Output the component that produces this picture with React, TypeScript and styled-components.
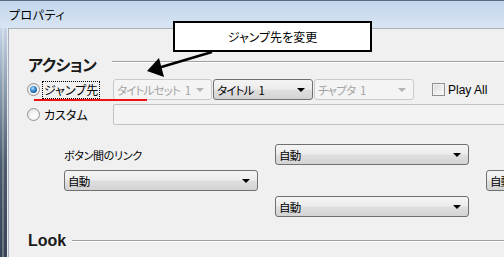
import React from "react";
import styled, { createGlobalStyle } from "styled-components";

const GlobalStyle = createGlobalStyle`
  html, body {
    margin: 0;
    padding: 0;
    background: #f0f0f0;
  }
  body {
    font-family: "Noto Sans CJK JP", "Liberation Sans", sans-serif;
    font-feature-settings: "palt";
  }
`;

const Window = styled.div`
  position: relative;
  width: 504px;
  height: 257px;
  overflow: hidden;
  display: flex;
  flex-direction: column;
  background: #f0f0f0;
`;

const TitleBar = styled.div`
  height: 28px;
  flex: none;
  display: flex;
  align-items: center;
  padding-left: 9px;
  box-sizing: border-box;
  border-top: 1px solid #5a6b7e;
  background: linear-gradient(180deg, #c3d6ec 0%, #cfdff0 60%, #d8e5f3 100%);
  font-size: 12px;
  color: #000;
  letter-spacing: 0.5px;
`;

const Frame = styled.div`
  flex: none;
  height: 229px;
  display: flex;
`;

const SideBorder = styled.div`
  width: 8px;
  flex: none;
  box-sizing: border-box;
  border-right: 1px solid #e8ecf0;
  background:
    linear-gradient(90deg, rgba(0, 0, 0, 0) 2px, rgba(255, 255, 255, 0.25) 2px, rgba(255, 255, 255, 0.25) 4px, rgba(0, 0, 0, 0) 4px),
    linear-gradient(180deg, #c6d5e5 0%, #8f9fb2 25%, #4b5a6c 60%, #364455 100%);
`;

const Panel = styled.div`
  flex: 1;
  min-width: 0;
  box-sizing: border-box;
  border-top: 1px solid #a8b0ba;
  border-left: 1px solid #a8b0ba;
  background: #f0f0f0;
  padding: 25px 0 0 18px;
  display: flex;
  flex-direction: column;
  & > * {
    flex: none;
  }
`;

const SectionHeader = styled.div<{ $top?: number; $lineShift?: number; $lineGap: number }>`
  display: flex;
  align-items: center;
  height: 20px;
  margin-top: ${({ $top }) => $top ?? 0}px;
  margin-left: 1px;
  &::after {
    content: "";
    flex: 1;
    margin-left: ${({ $lineGap }) => $lineGap}px;
    transform: translateY(${({ $lineShift }) => $lineShift ?? 0}px);
    border-top: 1px solid #a0a0a0;
    border-bottom: 1px solid #ffffff;
  }
`;

const HeaderText = styled.span<{ $latin?: boolean }>`
  font-family: ${({ $latin }) =>
    $latin ? '"Liberation Sans", sans-serif' : '"Noto Sans CJK JP", sans-serif'};
  font-size: 16px;
  font-weight: 700;
  color: #1a1a1a;
  line-height: 20px;
  letter-spacing: ${({ $latin }) => ($latin ? 0 : -0.5)}px;
`;

const OptionRow = styled.div<{ $top: number }>`
  display: flex;
  align-items: center;
  height: 21px;
  margin-top: ${({ $top }) => $top}px;
`;

const RadioGroup = styled.label`
  width: 86px;
  flex: none;
  display: flex;
  align-items: center;
  gap: 3px;
  font-size: 12px;
  color: #000;
`;

const RadioDot = styled.span<{ $checked?: boolean }>`
  position: relative;
  width: 13px;
  height: 13px;
  box-sizing: border-box;
  border-radius: 50%;
  border: 1px solid #929292;
  background: radial-gradient(circle at 60% 65%, #ffffff 0%, #f4f4f4 45%, #d6d6d6 100%);
  flex: none;
  &::after {
    content: "";
    display: ${({ $checked }) => ($checked ? "block" : "none")};
    position: absolute;
    left: 2px;
    top: 2px;
    width: 7px;
    height: 7px;
    border-radius: 50%;
    background: radial-gradient(circle at 40% 35%, #bfe6ff 0%, #3f96d8 35%, #14508e 80%, #0c3466 100%);
  }
`;

const RadioLabel = styled.span<{ $focused?: boolean }>`
  padding: 0 1px;
  line-height: 16px;
  outline: ${({ $focused }) => ($focused ? "1px dotted #000" : "none")};
  outline-offset: 0;
`;

const Select = styled.div<{ $width: number; $disabled?: boolean; $gap?: number }>`
  width: ${({ $width }) => $width}px;
  height: 21px;
  margin-left: ${({ $gap }) => $gap ?? 0}px;
  flex: none;
  box-sizing: border-box;
  border-radius: 3px;
  border: 1px solid ${({ $disabled }) => ($disabled ? "#c8cacc" : "#707070")};
  background: ${({ $disabled }) =>
    $disabled
      ? "#f4f4f4"
      : "linear-gradient(180deg, #f4f4f4 0%, #ececec 48%, #dfdfdf 52%, #d3d3d3 100%)"};
  display: flex;
  align-items: center;
  padding: 0 7px 0 3px;
  font-size: 11.5px;
  letter-spacing: -0.8px;
  word-spacing: 3px;
  color: ${({ $disabled }) => ($disabled ? "#a3a3a3" : "#000")};
  white-space: nowrap;
  overflow: hidden;
  &::after {
    content: "";
    margin-left: auto;
    flex: none;
    border-left: 4px solid transparent;
    border-right: 4px solid transparent;
    border-top: 4px solid ${({ $disabled }) => ($disabled ? "#b4b4b4" : "#000")};
  }
`;

const CheckGroup = styled.label`
  display: flex;
  align-items: center;
  gap: 3px;
  margin-left: 18px;
  font-family: "Liberation Sans", sans-serif;
  font-size: 12px;
  color: #000;
`;

const CheckBox = styled.span`
  width: 13px;
  height: 13px;
  box-sizing: border-box;
  border: 1px solid #8f8f8f;
  background: linear-gradient(135deg, #d8d8d8 0%, #efefef 60%, #fafafa 100%);
  box-shadow: inset 0 0 0 1px #f4f4f4;
`;

const TextField = styled.div`
  width: 420px;
  height: 21px;
  flex: none;
  box-sizing: border-box;
  border: 1px solid #c0c2c4;
  border-radius: 2px;
  background: #f3f3f3;
`;

const LinkGrid = styled.div`
  display: grid;
  grid-template-columns: 194px 194px 194px;
  grid-template-rows: 21px 21px 21px;
  column-gap: 17px;
  row-gap: 5px;
  height: 73px;
  margin-top: 19px;
  margin-left: 37px;
`;

const Cell = styled.div<{ $col: number; $row: number }>`
  grid-column: ${({ $col }) => $col};
  grid-row: ${({ $row }) => $row};
  display: flex;
  align-items: center;
`;

const SmallLabel = styled.span`
  font-size: 11px;
  letter-spacing: -0.3px;
  color: #000;
  padding-top: 1px;
`;

const Callout = styled.div`
  position: absolute;
  left: 173px;
  top: 21px;
  width: 199px;
  height: 31px;
  box-sizing: border-box;
  border: 2px solid #000;
  background: #fff;
  display: flex;
  align-items: center;
  justify-content: center;
  font-size: 12px;
  color: #000;
`;

const Arrow = styled.svg`
  position: absolute;
  left: 140px;
  top: 48px;
  overflow: visible;
`;

const RedUnderline = styled.div`
  position: absolute;
  left: 34px;
  top: 99px;
  width: 113px;
  height: 2px;
  background: #ee1111;
`;

const Auto = ({ width }: { width: number }) => <Select $width={width}>自動</Select>;

export default function App() {
  return (
    <>
      <GlobalStyle />
      <Window>
        <TitleBar>プロパティ</TitleBar>
        <Frame>
          <SideBorder />
          <Panel>
            <SectionHeader $lineShift={-2} $lineGap={16}>
              <HeaderText>アクション</HeaderText>
            </SectionHeader>

            <OptionRow $top={5}>
              <RadioGroup>
                <RadioDot $checked />
                <RadioLabel $focused>ジャンプ先</RadioLabel>
              </RadioGroup>
              <Select $width={99} $disabled>
                タイトルセット 1
              </Select>
              <Select $width={100} $gap={1}>
                タイトル 1
              </Select>
              <Select $width={100} $gap={1} $disabled>
                チャプタ 1
              </Select>
              <CheckGroup>
                <CheckBox />
                Play All
              </CheckGroup>
            </OptionRow>

            <OptionRow $top={4}>
              <RadioGroup>
                <RadioDot />
                <RadioLabel>カスタム</RadioLabel>
              </RadioGroup>
              <TextField />
            </OptionRow>

            <LinkGrid>
              <Cell $col={1} $row={1}>
                <SmallLabel>ボタン間のリンク</SmallLabel>
              </Cell>
              <Cell $col={1} $row={2}>
                <Auto width={194} />
              </Cell>
              <Cell $col={2} $row={1}>
                <Auto width={194} />
              </Cell>
              <Cell $col={2} $row={3}>
                <Auto width={194} />
              </Cell>
              <Cell $col={3} $row={2}>
                <Auto width={194} />
              </Cell>
            </LinkGrid>

            <SectionHeader $top={14} $lineGap={6}>
              <HeaderText $latin>Look</HeaderText>
            </SectionHeader>
          </Panel>
        </Frame>

        <Callout>ジャンプ先を変更</Callout>
        <Arrow width="80" height="32" viewBox="0 0 80 32">
          <line x1="72" y1="4" x2="18" y2="20" stroke="#000" strokeWidth="2.5" />
          <polygon points="7,23 19,10 24,29" fill="#000" />
        </Arrow>
        <RedUnderline />
      </Window>
    </>
  );
}
